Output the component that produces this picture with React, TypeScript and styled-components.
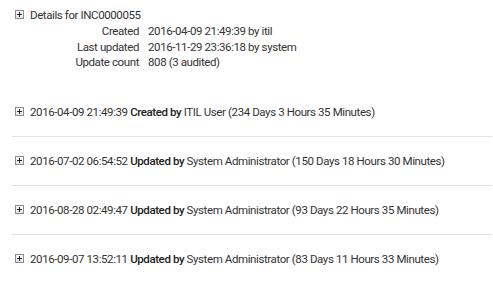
import React from "react";
import styled, { createGlobalStyle } from "styled-components";

const Global = createGlobalStyle`
  html, body { margin: 0; padding: 0; background: #fff; }
  body {
    font-family: Roboto, "Liberation Sans", sans-serif;
    font-size: 11.5px;
    letter-spacing: -0.4px;
    color: #333;
  }
`;

const Page = styled.div`
  width: 493px;
  padding: 6px 1px 0 12px;
  box-sizing: border-box;
`;

const Head = styled.div`
  display: flex;
  align-items: center;
  gap: 6px;
  height: 17px;
  padding-left: 3px;
`;

const Toggle = styled.span`
  width: 9px;
  height: 9px;
  box-sizing: border-box;
  border: 1px solid #8c8c8c;
  background: linear-gradient(#fdfdfd, #e6e6e6);
  position: relative;
  flex: none;
  &::before,
  &::after {
    content: "";
    position: absolute;
    background: #222;
  }
  &::before { left: 1px; right: 1px; top: 3px; height: 1px; }
  &::after { top: 1px; bottom: 1px; left: 3px; width: 1px; }
`;

const Details = styled.div`
  display: grid;
  grid-template-columns: 127px auto;
  column-gap: 9px;
  margin-top: 1px;
  line-height: 15.5px;
`;

const Label = styled.div`
  text-align: right;
`;

const Value = styled.div``;

const Entries = styled.div`
  margin-top: 33px;
`;

const Entry = styled.div<{ $last?: boolean }>`
  display: flex;
  align-items: center;
  gap: 6px;
  height: 16px;
  padding: 0 0 16px 3px;
  margin-bottom: 16px;
  border-bottom: ${(p) => (p.$last ? "none" : "1px solid #e2e2e2")};
`;

const Strong = styled.span`
  font-weight: 500;
  color: #222;
`;

const entries = [
  { date: "2016-04-09 21:49:39", action: "Created by", user: "ITIL User", dur: "234 Days 3 Hours 35 Minutes" },
  { date: "2016-07-02 06:54:52", action: "Updated by", user: "System Administrator", dur: "150 Days 18 Hours 30 Minutes" },
  { date: "2016-08-28 02:49:47", action: "Updated by", user: "System Administrator", dur: "93 Days 22 Hours 35 Minutes" },
  { date: "2016-09-07 13:52:11", action: "Updated by", user: "System Administrator", dur: "83 Days 11 Hours 33 Minutes" },
];

export default function App() {
  return (
    <Page>
      <Global />
      <Head>
        <Toggle />
        <span>Details for INC0000055</span>
      </Head>
      <Details>
        <Label>Created</Label>
        <Value>2016-04-09 21:49:39 by itil</Value>
        <Label>Last updated</Label>
        <Value>2016-11-29 23:36:18 by system</Value>
        <Label>Update count</Label>
        <Value>808 (3 audited)</Value>
      </Details>
      <Entries>
        {entries.map((e, i) => (
          <Entry key={i} $last={i === entries.length - 1}>
            <Toggle />
            <span>
              {e.date} <Strong>{e.action}</Strong> {e.user} ({e.dur})
            </span>
          </Entry>
        ))}
      </Entries>
    </Page>
  );
}
